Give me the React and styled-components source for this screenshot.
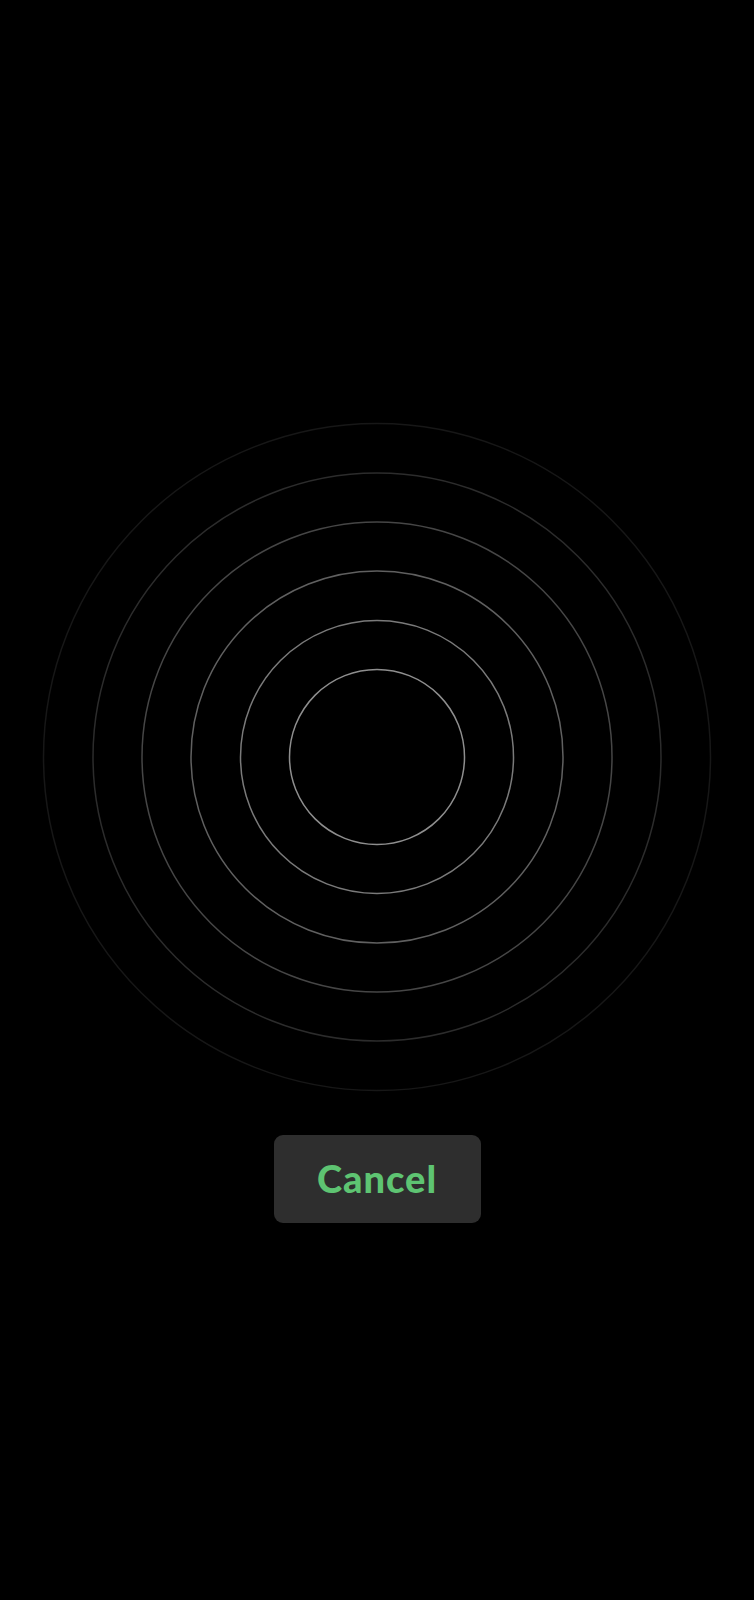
import styled, { createGlobalStyle } from 'styled-components';

const GlobalStyle = createGlobalStyle`
  html, body {
    margin: 0;
    padding: 0;
    background: #000;
  }
`;

const RINGS = [
  { r: 87.5, color: '#8e8e8e' },
  { r: 136.5, color: '#7a7a7a' },
  { r: 186, color: '#606060' },
  { r: 235, color: '#464646' },
  { r: 284, color: '#2c2c2c' },
  { r: 333.5, color: '#171717' },
];

function Ripple() {
  return (
    <RippleSvg width="680" height="680" viewBox="0 0 680 680">
      {RINGS.map((ring) => (
        <circle
          key={ring.r}
          cx="340"
          cy="340"
          r={ring.r}
          fill="none"
          stroke={ring.color}
          strokeWidth="1.5"
        />
      ))}
    </RippleSvg>
  );
}

function App() {
  return (
    <Screen>
      <GlobalStyle />
      <Ripple />
      <CancelButton type="button">Cancel</CancelButton>
    </Screen>
  );
}

const Screen = styled.div`
  width: 754px;
  height: 1600px;
  background: #000;
  display: flex;
  flex-direction: column;
  align-items: center;
  padding-top: 417px;
  box-sizing: border-box;
`;

const RippleSvg = styled.svg`
  display: block;
  flex-shrink: 0;
`;

const CancelButton = styled.button`
  margin-top: 38px;
  width: 207px;
  height: 88px;
  border: none;
  border-radius: 9px;
  background: #2e2e2e;
  color: #5ec472;
  font-family: 'Lato', 'Noto Sans', sans-serif;
  font-weight: 900;
  font-size: 38px;
  letter-spacing: 1px;
  padding: 0 0 2px;
  cursor: pointer;
`;

export default App;
